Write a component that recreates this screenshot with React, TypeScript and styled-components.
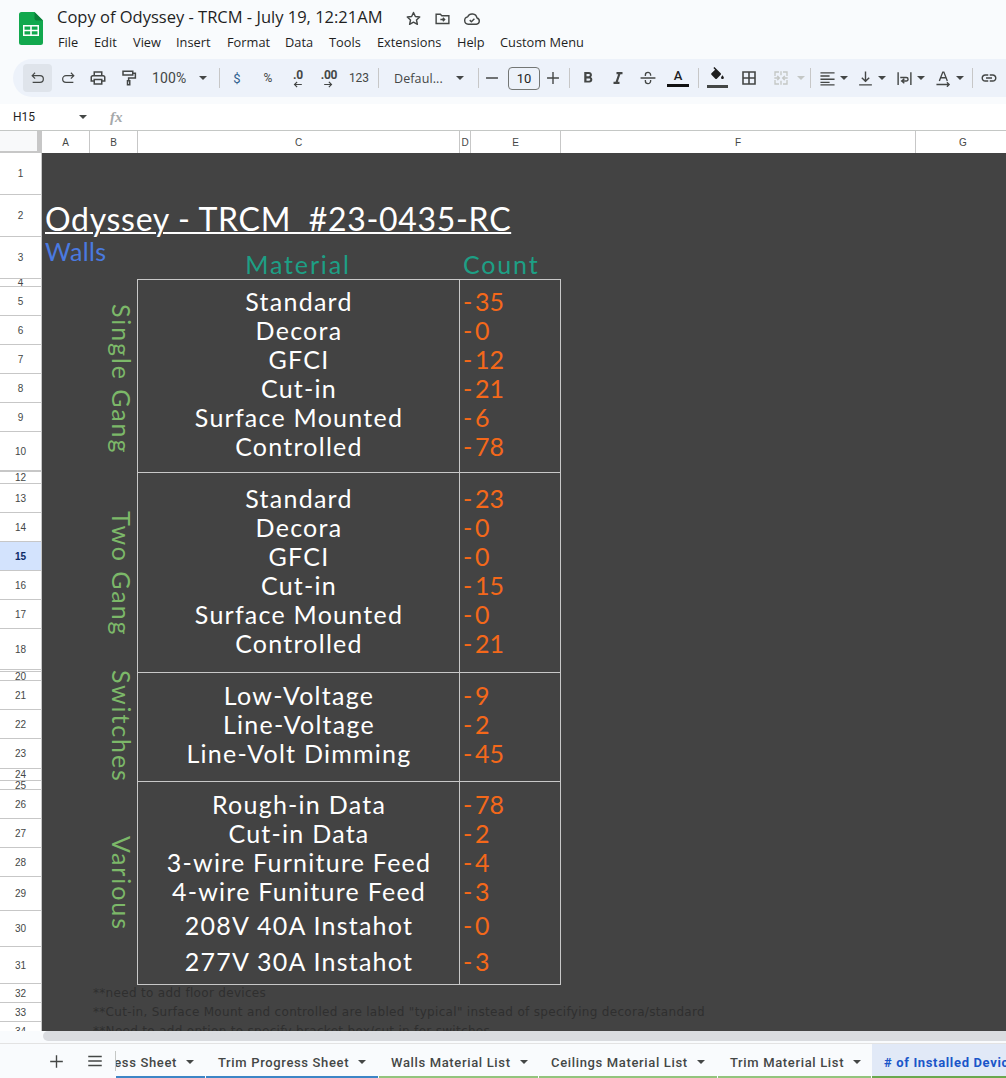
import React from "react";
import styled, { createGlobalStyle } from "styled-components";

const Global = createGlobalStyle`
  html, body { margin: 0; padding: 0; background: #f9fbfd; }
  * { box-sizing: border-box; }
`;

const UI = `Roboto, "Liberation Sans", sans-serif`;
const DISPLAY = `Lato, "Noto Sans", sans-serif`;

const Page = styled.div`
  width: 1006px; height: 1078px; overflow: hidden; display: flex; flex-direction: column;
  background: #f9fbfd; font-family: ${UI}; color: #444746;
`;
const Header = styled.header`
  height: 59px; flex: none; display: flex; padding: 12px 0 0 19px;
`;
const Logo = styled.svg`flex: none;`;
const TitleBlock = styled.div`
  margin-left: 14px; margin-top: -8px; display: flex; flex-direction: column;
`;
const TitleRow = styled.div`display: flex; align-items: center; height: 24px;`;
const DocTitle = styled.div`
  font-family: "Open Sans", sans-serif; font-size: 16.500px; color: #1f1f1f; width: 348px; white-space: nowrap;
`;
const TitleIcon = styled.svg`flex: none; margin-right: 12px; margin-top: 5px;`;
const Menu = styled.nav`display: flex; margin-top: 6px; margin-left: 1px;`;
const MenuItem = styled.span<{ $w: number }>`
  width: ${p => p.$w}px; color: #1f1f1f; white-space: nowrap; line-height: 16px; font-family: "Open Sans", sans-serif; font-size: 12.800px;
`;

const Toolbar = styled.div`
  flex: none; height: 38px; margin-left: 13px; padding-left: 10px; display: flex; align-items: center;
  background: #edf2fa; border-radius: 19px 0 0 19px; white-space: nowrap; overflow: hidden;
`;
const Tool = styled.div<{ $w?: number; $ml?: number; $active?: boolean }>`
  flex: none; width: ${p => p.$w ?? 30}px; margin-left: ${p => p.$ml ?? 0}px; height: 28px;
  display: flex; align-items: center; justify-content: center;
  border-radius: 4px; background: ${p => (p.$active ? "#dfe4eb" : "transparent")};
  font-size: 12px; color: #444746;
`;
const Currency = styled.span`font-size: 13px; color: #2f5f8f;`;
const Sep = styled.div<{ $ml?: number; $mr?: number }>`
  flex: none; width: 1px; height: 20px; background: #c7c7c7;
  margin-left: ${p => p.$ml ?? 0}px; margin-right: ${p => p.$mr ?? 0}px;
`;
const Caret = styled.i<{ $color?: string }>`
  display: block; width: 0; height: 0; flex: none; border-left: 4px solid transparent; border-right: 4px solid transparent;
  border-top: 4px solid ${p => p.$color ?? "#444746"};
`;
const CaretBox = styled.div`
  flex: none; width: 8px; display: flex; justify-content: center;
`;
const Select = styled.div<{ $w: number; $pl: number; $pr: number }>`
  flex: none; width: ${p => p.$w}px; padding: 0 ${p => p.$pr}px 0 ${p => p.$pl}px; display: flex; align-items: center; justify-content: space-between;
  font-size: 14px; color: #444746; letter-spacing: 0.1px;
`;
const FontName = styled.span`font-family: "Open Sans", sans-serif; font-size: 12.500px;`;
const SizeBox = styled.div`
  flex: none; width: 32px; height: 23px; margin-left: 3px; border: 1px solid #747775; border-radius: 4px;
  display: flex; align-items: center; justify-content: center; font-size: 13px; color: #1f1f1f;
`;
const DecStack = styled.div`display: flex; flex-direction: column; align-items: center; line-height: 10px; font-size: 12px; font-weight: 700; letter-spacing: -0.3px; margin-top: 2px;`;
const ColorStack = styled.div`display: flex; flex-direction: column; align-items: center; font-size: 13px; line-height: 14px; color: #1f1f1f; font-weight: 500;`;
const ColorBar = styled.div<{ $c: string; $w: number }>`width: ${p => p.$w}px; height: 3px; background: ${p => p.$c}; margin-top: 1px;`;
const FillStack = styled.div`display: flex; flex-direction: column; align-items: center; margin-top: -2px;`;

const FormulaBar = styled.div`
  flex: none; height: 26px; margin-top: 7px; background: #fff; display: flex; align-items: center; font-size: 12px; color: #1f1f1f;
`;
const NameBox = styled.div`
  width: 103px; padding-left: 13px; padding-right: 16px; display: flex; align-items: center; justify-content: space-between;
`;
const Fx = styled.span`
  font-family: "Liberation Serif", serif; font-style: italic; font-size: 15px; color: #a5a8ab; margin-left: 7px; font-weight: 700;
`;

const ColumnHeader = styled.div`
  flex: none; height: 23px; display: flex; background: #fff; border-top: 1px solid #c4c7c5;
`;
const Corner = styled.div`
  flex: none; width: 42px; height: 23px; background: #f8f9fa; border-right: 5px solid #c7c7c7; border-bottom: 3px solid #c7c7c7;
`;
const ColCell = styled.div<{ $w: number }>`
  flex: none; width: ${p => p.$w}px; display: flex; align-items: center; justify-content: center;
  border-right: 1px solid #c7c7c7; font-size: 10px; color: #444746; font-family: "Liberation Sans", sans-serif;
`;

const Sheet = styled.div`
  flex: none; height: 878px; overflow: hidden; display: grid; background: #434343;
  grid-template-columns: 42px 48px 47px 322px 12px 90px 355px 90px;
  grid-template-rows: 42px 42px 42px 8px 29px 29px 29px 29px 29px 39px 1px 12px 29px 29px 29px 29px 29px 41px 2px 9px 29px 29px 30px 12px 9px 29px 29px 29px 34px 36px 37px 19px 19px 19px;
`;
const RowHead = styled.div<{ $row: number; $active?: boolean }>`
  grid-column: 1; grid-row: ${p => p.$row}; background: ${p => (p.$active ? "#d3e3fd" : "#fff")};
  border-right: 1px solid #c7c7c7; border-bottom: 1px solid #c7c7c7; overflow: hidden;
  display: flex; align-items: center; justify-content: center; font-size: 10px; color: ${p => (p.$active ? "#0b2a66" : "#444746")};
  font-weight: ${p => (p.$active ? 700 : 400)}; font-family: "Liberation Sans", sans-serif;
`;
const Title = styled.div`
  grid-column: 2 / 7; grid-row: 2; align-self: end; padding-left: 3px; font-family: ${DISPLAY};
  font-size: 32px; line-height: 36px; color: #fff; text-decoration: underline; text-decoration-thickness: 1.500px; text-underline-offset: 1px; letter-spacing: 0.680px; white-space: pre;
`;
const Walls = styled.div`
  grid-column: 2 / 4; grid-row: 3; padding-left: 3px; font-family: ${DISPLAY}; font-size: 25px; line-height: 28px; letter-spacing: 0.400px; color: #4a7ae0; white-space: nowrap;
`;
const HeadLabel = styled.div<{ $col: string; $pl?: number; $center?: boolean }>`
  grid-column: ${p => p.$col}; grid-row: 3; align-self: end; text-align: ${p => (p.$center ? "center" : "left")};
  padding-left: ${p => p.$pl ?? 0}px; font-family: ${DISPLAY}; font-size: 25px; line-height: 30px; letter-spacing: 1.850px; color: #1d9f85;
`;
const Frame = styled.div<{ $rows: string; $col: string; $last?: boolean }>`
  grid-row: ${p => p.$rows}; grid-column: ${p => p.$col};
  border-top: 1px solid #c8c8c8; border-left: 1px solid #c8c8c8;
  border-right: ${p => (p.$col === "5 / 7" ? "1px solid #c8c8c8" : "none")};
  border-bottom: ${p => (p.$last ? "1px solid #c8c8c8" : "none")};
  margin-bottom: ${p => (p.$last ? "-1px" : "0")};
`;
const SideLabel = styled.div<{ $rows: string; $pb?: number }>`
  grid-column: 3; grid-row: ${p => p.$rows}; display: flex; align-items: flex-start; justify-content: center; padding-bottom: ${p => p.$pb ?? 0}px;
  font-family: ${DISPLAY}; font-size: 25px; letter-spacing: 1.900px; color: #7cb869; writing-mode: vertical-rl; white-space: nowrap; line-height: 30px;
`;
const Label = styled.div<{ $row: number }>`
  grid-column: 4; grid-row: ${p => p.$row}; padding-left: 2px; text-align: center; font-family: ${DISPLAY}; font-size: 25px; line-height: 29px; letter-spacing: 1.250px; color: #fff; white-space: nowrap; z-index: 1;
`;
const CountCell = styled.div<{ $row: number }>`
  grid-column: 5 / 7; grid-row: ${p => p.$row}; padding-left: 4px; font-family: ${DISPLAY}; font-size: 25px; line-height: 29px; letter-spacing: -0.200px; color: #f4681a; white-space: pre; z-index: 1;
`;
const Dash = styled.span`margin-right: 3px;`;
const Note = styled.div<{ $row: number }>`
  grid-column: 3 / 9; grid-row: ${p => p.$row}; padding-left: 3px; font-family: "DejaVu Sans", sans-serif; font-size: 12px; letter-spacing: 0.310px; line-height: 19px; color: #2f2f2f; white-space: pre;
`;

const ScrollTrack = styled.div`flex: none; height: 13px; padding: 0 0 2px 43px; background: #f9fbfd; border-bottom: 1px solid #e3e3e3;`;
const ScrollThumb = styled.div`height: 10px; background: #dadce0; border-radius: 5px 0 0 5px;`;
const TabBar = styled.div`flex: 1; display: flex; align-items: stretch; background: #f9fbfd; font-size: 13px;`;
const TabTool = styled.div<{ $w: number }>`flex: none; width: ${p => p.$w}px; display: flex; align-items: center; justify-content: center;`;
const TabDivider = styled.div`flex: none; width: 1px; height: 20px; margin-top: 7px; background: #c4c7c5;`;
const Tab = styled.div<{ $w: number; $bar: string; $active?: boolean; $clip?: boolean }>`
  flex: none; width: ${p => p.$w}px; margin-right: 1px; display: flex; align-items: center; gap: 9px; overflow: hidden;
  justify-content: ${p => (p.$clip ? "flex-end" : "flex-start")};
  padding: 4px ${p => (p.$active ? 0 : p.$clip ? 11 : 14)}px 0 ${p => (p.$clip ? 0 : 12)}px;
  background: ${p => (p.$active ? "#e1e9f7" : "transparent")}; border-bottom: 2px solid ${p => p.$bar};
  font-weight: ${p => (p.$active ? 700 : 500)}; color: ${p => (p.$active ? "#1a56c9" : "#444746")}; letter-spacing: 0.650px; white-space: nowrap;
`;
const TabText = styled.span`flex: none;`;

const Stroke = ({ s = 16, w = 1.5, c = "#444746", children }: { s?: number; w?: number; c?: string; children: React.ReactNode }) => (
  <svg width={s} height={s} viewBox="0 0 24 24" fill="none" stroke={c} strokeWidth={w} strokeLinecap="square" strokeLinejoin="miter">{children}</svg>
);
const Solid = ({ s = 16, c = "#444746", d }: { s?: number; c?: string; d: string }) => (
  <svg width={s} height={s} viewBox="0 0 24 24" fill={c}><path d={d} /></svg>
);

const groups = [
  { frame: "4 / 12", last: false, side: "5 / 11", pb: 0, sideText: "Single Gang", items: [[5, "Standard", "35"], [6, "Decora", "0"], [7, "GFCI", "12"], [8, "Cut-in", "21"], [9, "Surface Mounted", "6"], [10, "Controlled", "78"]] },
  { frame: "12 / 20", last: false, side: "13 / 19", pb: 6, sideText: "Two Gang", items: [[13, "Standard", "23"], [14, "Decora", "0"], [15, "GFCI", "0"], [16, "Cut-in", "15"], [17, "Surface Mounted", "0"], [18, "Controlled", "21"]] },
  { frame: "20 / 25", last: false, side: "20 / 25", pb: 0, sideText: "Switches", items: [[21, "Low-Voltage", "9"], [22, "Line-Voltage", "2"], [23, "Line-Volt Dimming", "45"]] },
  { frame: "25 / 32", last: true, side: "26 / 32", pb: 8, sideText: "Various", items: [[26, "Rough-in Data", "78"], [27, "Cut-in Data", "2"], [28, "3-wire Furniture Feed", "4"], [29, "4-wire Funiture Feed", "3"], [30, "208V 40A Instahot", "0"], [31, "277V 30A Instahot", "3"]] },
] as { frame: string; last: boolean; side: string; pb: number; sideText: string; items: [number, string, string][] }[];

const hiddenRows = [11, 19];
const columns: [string, number][] = [["A", 48], ["B", 48], ["C", 322], ["D", 11], ["E", 90], ["F", 355], ["G", 95]];
const menu: [string, number][] = [["File", 36], ["Edit", 39], ["View", 43], ["Insert", 51], ["Format", 58], ["Data", 44], ["Tools", 48], ["Extensions", 80], ["Help", 43], ["Custom Menu", 90]];

export default function App() {
  return (
    <Page>
      <Global />
      <Header>
        <Logo width="24" height="33" viewBox="0 0 24 33">
          <path d="M2.500 0H15.500L24 8.500V30.500A2.500 2.500 0 0 1 21.500 33H2.500A2.500 2.500 0 0 1 0 30.500V2.500A2.500 2.500 0 0 1 2.500 0Z" fill="#12a84e" />
          <path d="M15.500 0L24 8.500H17.500A2 2 0 0 1 15.500 6.500Z" fill="#0c7f3a" />
          <path fillRule="evenodd" d="M4 13H20V24H4ZM5.500 14.500V17.700H11.200V14.500ZM12.800 14.500V17.700H18.500V14.500ZM5.500 19.300V22.500H11.200V19.300ZM12.800 19.300V22.500H18.500V19.300Z" fill="#fff" />
        </Logo>
        <TitleBlock>
          <TitleRow>
            <DocTitle>Copy of Odyssey - TRCM - July 19, 12:21AM</DocTitle>
            <TitleIcon width="17" height="17" viewBox="0 0 24 24" fill="none" stroke="#444746" strokeWidth="2"><path d="M12 3.500l2.600 5.700 6.200.700-4.600 4.200 1.300 6.100-5.500-3.100-5.500 3.100 1.300-6.100-4.600-4.200 6.200-.700z" strokeLinejoin="round" /></TitleIcon>
            <TitleIcon width="17" height="17" viewBox="0 0 24 24" fill="none" stroke="#444746" strokeWidth="2"><path d="M3 6h6l2 2h10v11H3zM9 13.500h6M12.500 11l2.500 2.500-2.500 2.500" /></TitleIcon>
            <TitleIcon width="18" height="18" viewBox="0 0 24 24" fill="none" stroke="#444746" strokeWidth="1.900"><path d="M7 19a5 5 0 0 1-.700-9.900A6.500 6.500 0 0 1 18.600 10.600a4.300 4.300 0 0 1-.600 8.400zM9 13.500l2.200 2.200 4-4" strokeLinejoin="round" /></TitleIcon>
          </TitleRow>
          <Menu>
            {menu.map(([m, w]) => <MenuItem key={m} $w={w}>{m}</MenuItem>)}
          </Menu>
        </TitleBlock>
      </Header>

      <Toolbar>
        <Tool $active $w={29}><Stroke s={17} w={1.700}><path d="M8 4.500L4.500 8 8 11.500M5 8h10.500a4 4 0 0 1 0 9.500H6" /></Stroke></Tool>
        <Tool $ml={1}><Stroke s={17} w={1.700}><path d="M16 4.500L19.500 8 16 11.500M19 8H8.500a4 4 0 0 0 0 9.500H18" /></Stroke></Tool>
        <Tool><Solid s={18} d="M19 8h-1V3H6v5H5c-1.660 0-3 1.340-3 3v6h4v4h12v-4h4v-6c0-1.660-1.340-3-3-3zM8 5h8v3H8V5zm8 14H8v-4h8v4zm2-4v-2H6v2H4v-4c0-.550.450-1 1-1h14c.550 0 1 .450 1 1v4h-2z" /></Tool>
        <Tool $w={31}><Stroke s={18} w={2}><path d="M4 3h13v5H4zM17 5.500h3.500V12H11.500v3.500M10 15.500h3V21h-3z" /></Stroke></Tool>
        <Select $w={75} $pl={8} $pr={12}><span>100%</span><Caret /></Select>
        <Sep $mr={2} />
        <Tool><Currency>$</Currency></Tool>
        <Tool $ml={1}><span>%</span></Tool>
        <Tool><DecStack>.0<Stroke s={9} w={3}><path d="M22 12H4M10 6l-6 6 6 6" /></Stroke></DecStack></Tool>
        <Tool $ml={1}><DecStack>.00<Stroke s={9} w={3}><path d="M2 12h18M14 6l6 6-6 6" /></Stroke></DecStack></Tool>
        <Tool><span>123</span></Tool>
        <Sep $ml={4} />
        <Select $w={99} $pl={15} $pr={14}><FontName>Defaul...</FontName><Caret /></Select>
        <Sep />
        <Tool $w={26}><Stroke s={14} w={2.400}><path d="M3 12h18" /></Stroke></Tool>
        <SizeBox>10</SizeBox>
        <Tool $w={26}><Stroke s={14} w={2.400}><path d="M3 12h18M12 3v18" /></Stroke></Tool>
        <Sep $ml={3} />
        <Tool $ml={3}><Solid s={18} d="M15.600 10.790c.970-.670 1.650-1.770 1.650-2.790 0-2.260-1.750-4-4-4H7v14h7.040c2.090 0 3.710-1.700 3.710-3.790 0-1.520-.860-2.820-2.150-3.420zM10 6.500h3c.830 0 1.500.670 1.500 1.500s-.670 1.500-1.500 1.500h-3v-3zm3.500 9H10v-3h3.500c.830 0 1.500.670 1.500 1.500s-.670 1.500-1.500 1.500z" /></Tool>
        <Tool><Solid s={18} d="M10 4v3h2.210l-3.420 10H6v3h8v-3h-2.210l3.420-10H18V4z" /></Tool>
        <Tool><Stroke s={18} w={1.800}><path d="M3 12h18M8.500 8.500V8a3.500 3.500 0 0 1 7 0M8.500 15.500v.500a3.500 3.500 0 0 0 7 0v-.500" /></Stroke></Tool>
        <Tool><ColorStack>A<ColorBar $c="#111" $w={22} /></ColorStack></Tool>
        <Sep $ml={5} />
        <Tool $ml={3} $w={31}><FillStack><Solid s={17} c="#1f1f1f" d="M16.560 8.940L7.620 0 6.210 1.410l2.380 2.380-5.150 5.150c-.590.590-.590 1.540 0 2.120l5.500 5.500c.290.290.680.440 1.060.440s.770-.150 1.060-.440l5.500-5.500c.590-.580.590-1.530 0-2.120zM19 11.500s-2 2.170-2 3.500c0 1.100.900 2 2 2s2-.900 2-2c0-1.330-2-3.500-2-3.500z" /><ColorBar $c="#444746" $w={21} /></FillStack></Tool>
        <Tool $w={32}><Stroke s={16} w={2.400}><path d="M3 3h18v18H3zM12 3v18M3 12h18" /></Stroke></Tool>
        <Tool $w={32}><Stroke s={16} w={2} c="#c4c7c5"><path d="M3 8V3h5M16 3h5v5M3 16v5h5M16 21h5v-5M3 12h6M7 9.500L9.500 12 7 14.500M21 12h-6M17 9.500L14.500 12l2.500 2.500M12 3v4M12 17v4" /></Stroke></Tool>
        <CaretBox><Caret $color="#c4c7c5" /></CaretBox>
        <Sep $ml={5} />
        <Tool $ml={3} $w={26}><Stroke s={17} w={1.900}><path d="M3 4h18M3 8.500h11M3 13h18M3 17.500h11M3 21h18" /></Stroke></Tool>
        <CaretBox><Caret /></CaretBox>
        <Tool $ml={4} $w={26}><Stroke s={17} w={2}><path d="M4 21h16M12 3v13M7.500 11.500L12 16l4.500-4.500" /></Stroke></Tool>
        <CaretBox><Caret /></CaretBox>
        <Tool $ml={5} $w={26}><Stroke s={17} w={2}><path d="M3 4v16M21 4v16M7 10.500h7.500a2.500 2.500 0 0 1 0 5H8.500M11 13l-3 2.500 3 2.500" /></Stroke></Tool>
        <CaretBox><Caret /></CaretBox>
        <Tool $ml={5} $w={26}><Stroke s={17} w={1.900}><path d="M6.500 14.500L11 3h1.500L17 14.500M8 11h7.500M3 20.500h16M17.500 18l2.500 2.500-2.500 2.500" /></Stroke></Tool>
        <CaretBox><Caret /></CaretBox>
        <Sep $ml={8} />
        <Tool $ml={1}><Solid s={18} d="M3.900 12c0-1.710 1.390-3.100 3.100-3.100h4V7H7c-2.760 0-5 2.240-5 5s2.240 5 5 5h4v-1.900H7c-1.710 0-3.100-1.390-3.100-3.100zM8 13h8v-2H8v2zm9-6h-4v1.900h4c1.710 0 3.100 1.390 3.100 3.100s-1.390 3.100-3.100 3.100h-4V17h4c2.760 0 5-2.240 5-5s-2.240-5-5-5z" /></Tool>
      </Toolbar>

      <FormulaBar>
        <NameBox><span>H15</span><Caret /></NameBox>
        <Fx>fx</Fx>
      </FormulaBar>

      <ColumnHeader>
        <Corner />
        {columns.map(([c, w]) => <ColCell key={c} $w={w}>{c}</ColCell>)}
      </ColumnHeader>

      <Sheet>
        {Array.from({ length: 34 }, (_, i) => i + 1).map(n => (
          <RowHead key={n} $row={n} $active={n === 15}>{hiddenRows.includes(n) ? "" : n}</RowHead>
        ))}
        <Title>{"Odyssey - TRCM  #23-0435-RC"}</Title>
        <Walls>Walls</Walls>
        <HeadLabel $col="4" $center>Material</HeadLabel>
        <HeadLabel $col="5 / 7" $pl={4}>Count</HeadLabel>
        {groups.map(g => (
          <React.Fragment key={g.frame}>
            <Frame $rows={g.frame} $col="4" $last={g.last} />
            <Frame $rows={g.frame} $col="5 / 7" $last={g.last} />
            <SideLabel $rows={g.side} $pb={g.pb}>{g.sideText}</SideLabel>
            {g.items.map(([r, label, count]) => (
              <React.Fragment key={r}>
                <Label $row={r}>{label}</Label>
                <CountCell $row={r}><Dash>-</Dash>{count}</CountCell>
              </React.Fragment>
            ))}
          </React.Fragment>
        ))}
        <Note $row={32}>**need to add floor devices</Note>
        <Note $row={33}>**Cut-in, Surface Mount and controlled are labled "typical" instead of specifying decora/standard</Note>
        <Note $row={34}>**Need to add option to specify bracket box/cut in for switches</Note>
      </Sheet>

      <ScrollTrack><ScrollThumb /></ScrollTrack>

      <TabBar>
        <TabTool $w={37} />
        <TabTool $w={38}><Stroke s={15} w={2.200}><path d="M12 3v18M3 12h18" /></Stroke></TabTool>
        <TabTool $w={40}><Stroke s={18} w={2}><path d="M4 6h16M4 12h16M4 18h16" /></Stroke></TabTool>
        <TabDivider />
        <Tab $w={89} $bar="#3d85c6" $clip><TabText>Walls Progress Sheet</TabText><Caret /></Tab>
        <Tab $w={172} $bar="#3d85c6"><TabText>Trim Progress Sheet</TabText><Caret /></Tab>
        <Tab $w={159} $bar="#93c47d"><TabText>Walls Material List</TabText><Caret /></Tab>
        <Tab $w={178} $bar="#93c47d"><TabText>Ceilings Material List</TabText><Caret /></Tab>
        <Tab $w={153} $bar="#93c47d"><TabText>Trim Material List</TabText><Caret /></Tab>
        <Tab $w={200} $bar="#6aa84f" $active><TabText># of Installed Devices</TabText></Tab>
      </TabBar>
    </Page>
  );
}
